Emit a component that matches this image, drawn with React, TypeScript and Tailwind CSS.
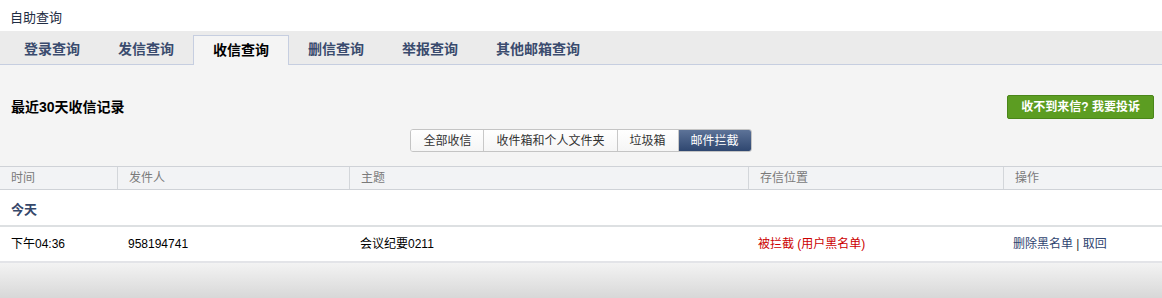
import React, { useState } from 'react'

const tabs = ['登录查询', '发信查询', '收信查询', '删信查询', '举报查询', '其他邮箱查询']
const filters = ['全部收信', '收件箱和个人文件夹', '垃圾箱', '邮件拦截']

const cols = ['时间', '发件人', '主题', '存信位置', '操作']

export default function App() {
  const [tab, setTab] = useState(2)
  const [filter, setFilter] = useState(3)

  return (
    <div className="w-[1162px] h-[298px] overflow-hidden bg-white text-[13px] text-[#333] font-['Liberation_Sans','Noto_Sans_CJK_SC',sans-serif]">
      <div className="h-[31px] px-[10px] pt-[9px] leading-[18px] text-[13px] text-[#1f2d44]">自助查询</div>

      {/* tab bar */}
      <div className="h-[34px] bg-[#ebebeb] border-b border-[#c6cee0] flex items-end pl-[5px]">
        {tabs.map((t, i) =>
          i === tab ? (
            <div
              key={t}
              onClick={() => setTab(i)}
              className="h-[30px] -mb-px px-[19px] bg-[#f4f4f4] border border-b-0 border-[#c6cee0] flex items-center text-[14px] font-bold text-black cursor-pointer"
            >
              {t}
            </div>
          ) : (
            <div
              key={t}
              onClick={() => setTab(i)}
              className="h-[30px] px-[19px] flex items-center text-[14px] font-bold text-[#3a4b6e] cursor-pointer"
            >
              {t}
            </div>
          )
        )}
      </div>

      {/* summary */}
      <div className="h-[101px] bg-[#f4f4f4] flex flex-col">
        <div className="mt-[30px] h-[24px] flex items-center justify-between pl-[11px] pr-[8px]">
          <div className="font-bold text-black text-[14px]">最近30天收信记录</div>
          <button className="h-[24px] px-[13px] bg-[#5c9d22] border border-[#4a8619] rounded-[2px] text-white font-bold text-[12px] leading-none">
            收不到来信? 我要投诉
          </button>
        </div>
        <div className="mt-[10px] flex justify-center">
          <div className="flex h-[23px] border border-[#c4c4c4] rounded-[3px] overflow-hidden bg-white text-[12px]">
            {filters.map((f, i) => (
              <div
                key={f}
                onClick={() => setFilter(i)}
                className={
                  i === filter
                    ? 'px-[12px] flex items-center text-white bg-gradient-to-b from-[#5d7398] to-[#2f4770] cursor-pointer'
                    : 'px-[12px] flex items-center text-[#333] bg-gradient-to-b from-white to-[#f5f5f5] border-r border-[#c8c8c8] cursor-pointer'
                }
              >
                {f}
              </div>
            ))}
          </div>
        </div>
      </div>

      {/* table */}
      <div className="grid grid-cols-[117px_232px_399px_255px_1fr] h-[24px] bg-[#f2f3f5] border-y border-[#cfd2d7] text-[#7a7a7a] text-[12px]">
        {cols.map((c, i) => (
          <div key={c} className={`pl-[11px] flex items-center ${i > 0 ? 'border-l border-[#d3d6da]' : ''}`}>
            {c}
          </div>
        ))}
      </div>

      <div className="h-[37px] flex items-center pt-[4px] pl-[11px] font-bold text-[#35476a] border-b-[2px] border-[#dde0e2]">今天</div>

      <div className="grid grid-cols-[117px_232px_399px_255px_1fr] h-[36px] items-center border-b-[2px] border-[#e3e4e8] text-black text-[12px]">
        <div className="pl-[11px]">下午04:36</div>
        <div className="pl-[11px]">958194741</div>
        <div className="pl-[11px]">会议纪要0211</div>
        <div className="pl-[10px] text-[#cc0000]">被拦截 (用户黑名单)</div>
        <div className="pl-[10px] text-[#2f4470]">
          <a className="cursor-pointer">删除黑名单</a>
          <span className="text-[#333]"> | </span>
          <a className="cursor-pointer">取回</a>
        </div>
      </div>

      <div className="h-[40px] bg-gradient-to-b from-[#f3f3f3] to-[#d4d4d4]"></div>
    </div>
  )
}
